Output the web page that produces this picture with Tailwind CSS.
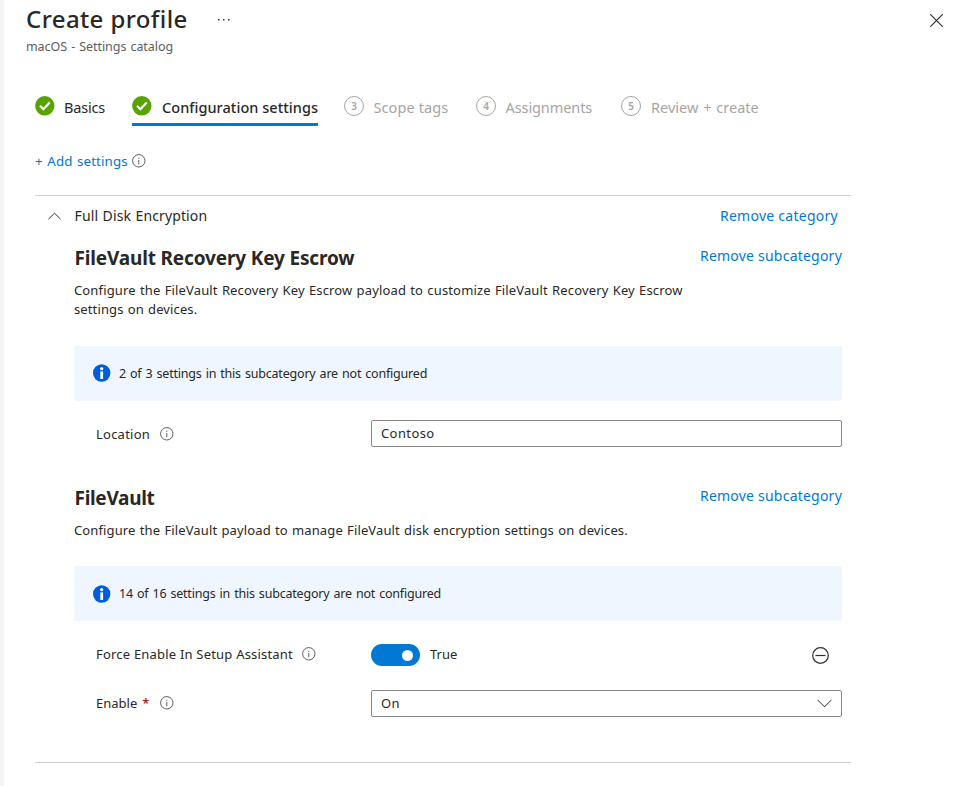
<!DOCTYPE html>
<html lang="en">
<head>
<meta charset="utf-8">
<title>Create profile</title>
<script src="https://cdn.jsdelivr.net/npm/@tailwindcss/browser@4"></script>
</head>
<body class="h-[786px] w-[974px] overflow-hidden bg-white font-['Noto_Sans','Open_Sans',sans-serif] text-[13px] text-[#292827]">
<svg class="hidden">
  <symbol id="info" viewBox="0 0 14 14"><circle cx="6.8" cy="6.8" r="6.2" fill="none" stroke="#605e5c"/><path d="M6.8 6v4.2M6.8 3.8v1.1" stroke="#605e5c"/></symbol>
  <symbol id="check" viewBox="0 0 20 20"><circle cx="9.8" cy="9.8" r="9.7" fill="#57a300"/><path d="M5 9.8l3.4 3.4 6.4-6.8" fill="none" stroke="#fff" stroke-width="2.2"/></symbol>
  <symbol id="infofill" viewBox="0 0 18 18"><circle cx="8.7" cy="9" r="8.7" fill="#015cda"/><circle cx="8.7" cy="4.7" r="1.6" fill="#fff"/><path d="M7.3 7.4h2.8v7.6h-2.8z" fill="#fff"/></symbol>
</svg>
<div class="flex h-full border-l-4 border-[#f5f5f5]">
<main class="w-full whitespace-nowrap">
  <header class="flex h-[55px] justify-between pl-[22px] pr-[31px]">
    <div>
      <div class="flex h-[37px] items-center">
        <h1 class="w-[161px] text-[24px] leading-[37px] font-medium tracking-[0.4px]">Create profile</h1>
        <svg class="ml-[30px] mt-[3px] h-1 w-[14px]" viewBox="0 0 14 4" fill="#323130"><path d="M1 1h1.5v1.5H1zM6 1h1.5v1.5H6zM11 1h1.5v1.5H11z"/></svg>
      </div>
      <p class="text-[12.5px] leading-[20px] [word-spacing:1px] tracking-[-0.07px] text-[#605e5c]">macOS - Settings catalog</p>
    </div>
    <svg class="mt-[14px] size-[13px]" viewBox="0 0 13 13" stroke="#323130" stroke-width="1.2"><path d="M.3.3l12.4 12.4M12.7.3L.3 12.7"/></svg>
  </header>
  <nav class="mt-[37px] flex h-[34px] pl-[31px] text-[14.5px] leading-[30px] text-[#a6a5a4]">
    <div class="flex w-[97px] text-[#292827]"><svg class="mt-1 mr-[9px] size-5 shrink-0"><use href="#check"/></svg><span class="tracking-[-0.19px]">Basics</span></div>
    <div class="mr-[26px] flex w-[186px] border-b-3 border-[#0078d4] font-medium text-[#292827]"><svg class="mt-1 mr-[10px] size-5 shrink-0"><use href="#check"/></svg><span class="tracking-[0.04px]">Configuration settings</span></div>
    <div class="flex w-[132px]"><b class="mt-1 mr-[9.5px] size-5 rounded-full border border-[#a6a5a4] text-center text-[10px] leading-[18px] font-semibold">3</b><span class="tracking-[0.1px]">Scope tags</span></div>
    <div class="flex w-[145px]"><b class="mt-1 mr-[9.5px] size-5 rounded-full border border-[#a6a5a4] text-center text-[10px] leading-[18px] font-semibold">4</b><span class="tracking-[-0.09px]">Assignments</span></div>
    <div class="flex"><b class="mt-1 mr-[10px] size-5 rounded-full border border-[#a6a5a4] text-center text-[10px] leading-[18px] font-semibold">5</b><span class="[word-spacing:1px] tracking-[0.02px]">Review + create</span></div>
  </nav>
  <div class="mt-[25px] flex h-5 items-center pl-[31px] leading-5"><a class="w-[97px] text-[13.3px] [word-spacing:1px] tracking-[0.12px] text-[#0078d4]">+ Add settings</a><svg class="size-[14px]"><use href="#info"/></svg></div>

  <section class="mt-6 ml-[31px] h-[568px] w-[816px] border-y border-[#d2d2d2] pr-[9px] pl-[39px]">
    <div class="-ml-[26px] flex h-[39px] items-center text-[14px]">
      <svg class="mr-[13.5px] h-2 w-[13px]" viewBox="0 0 13 8" fill="none" stroke="#323130"><path d="M.4 7.2l6.1-6 6.1 6"/></svg>
      <h2 class="[word-spacing:0.7px] tracking-[0.12px]">Full Disk Encryption</h2>
      <a class="mr-1 ml-auto tracking-[0.263px] text-[#0078d4]">Remove category</a>
    </div>

    <div class="flex h-[46px] justify-between"><h3 class="pl-[0.5px] text-[19px] leading-[46px] font-bold tracking-[-0.16px]">FileVault Recovery Key Escrow</h3><a class="text-[14px] leading-[41px] tracking-[0.22px] text-[#0078d4]">Remove subcategory</a></div>
    <p class="h-[65px] leading-[19px]"><span class="[word-spacing:0.7px] tracking-[0.145px]">Configure the FileVault Recovery Key Escrow payload to customize FileVault Recovery Key Escrow</span><br><span class="[word-spacing:0.7px] tracking-[0.12px]">settings on devices.</span></p>
    <div class="flex h-[55px] items-center rounded-xs bg-[#eff6ff] pl-[19px]"><svg class="mr-2 mb-px size-[18px]"><use href="#infofill"/></svg><span class="pt-0.5 text-[12.5px] [word-spacing:1px] tracking-[-0.2px]">2 of 3 settings in this subcategory are not configured</span></div>
    <div class="mt-[19px] flex h-[27px] items-center pl-[22px]">
      <label class="flex w-[275px] items-center"><span class="w-16 pt-0.5 tracking-[0.23px]">Location</span><svg class="size-[14px]"><use href="#info"/></svg></label>
      <div class="h-[27px] flex-1 rounded-xs border border-[#8a8886] pl-[9px] leading-[25px] tracking-[0.4px]">Contoso</div>
    </div>

    <div class="mt-[29px] flex h-[45px] justify-between"><h3 class="pl-[0.5px] text-[19px] leading-[45px] font-bold tracking-[-0.3px]">FileVault</h3><a class="text-[14px] leading-[40px] tracking-[0.22px] text-[#0078d4]">Remove subcategory</a></div>
    <p class="h-[45px] leading-[19px] [word-spacing:0.7px] tracking-[0.127px]">Configure the FileVault payload to manage FileVault disk encryption settings on devices.</p>
    <div class="flex h-[55px] items-center rounded-xs bg-[#eff6ff] pl-[19px]"><svg class="mr-2 size-[18px]"><use href="#infofill"/></svg><span class="pt-0.5 text-[12.5px] [word-spacing:1px] tracking-[-0.2px]">14 of 16 settings in this subcategory are not configured</span></div>
    <div class="mt-[23px] flex h-[22px] items-center pl-[22px]">
      <label class="flex w-[275px] items-center"><span class="w-[206px] tracking-[0.202px]">Force Enable In Setup Assistant</span><svg class="mb-0.5 size-[14px]"><use href="#info"/></svg></label>
      <div class="flex h-[22px] w-[49px] items-center justify-end rounded-full bg-[#0078d4] pr-[7px]"><i class="size-[11px] rounded-full bg-white"></i></div>
      <span class="ml-[10px]">True</span>
      <svg class="mr-[13px] ml-auto size-[17px]" viewBox="0 0 17 17" fill="none" stroke="#323130"><circle cx="8.5" cy="8.5" r="7.8" stroke-width="1.2"/><path d="M3.5 8.5h10" stroke-width="1.2"/></svg>
    </div>
    <div class="mt-6 flex h-[27px] items-center pl-[22px]">
      <label class="flex w-[275px] items-center"><span>Enable</span><span class="ml-[5px] w-[17.7px] font-semibold text-[#a4262c]">*</span><svg class="mb-0.5 size-[14px]"><use href="#info"/></svg></label>
      <div class="flex h-[27px] flex-1 items-center justify-between rounded-xs border border-[#8a8886] pr-[9px] pl-[9px] leading-[25px]"><span class="tracking-[0.4px]">On</span><svg class="h-[9px] w-[15px]" viewBox="0 0 15 9" fill="none" stroke="#323130"><path d="M.5.8l7 7 7-7"/></svg></div>
    </div>
  </section>
</main>
</div>
</body>
</html>
